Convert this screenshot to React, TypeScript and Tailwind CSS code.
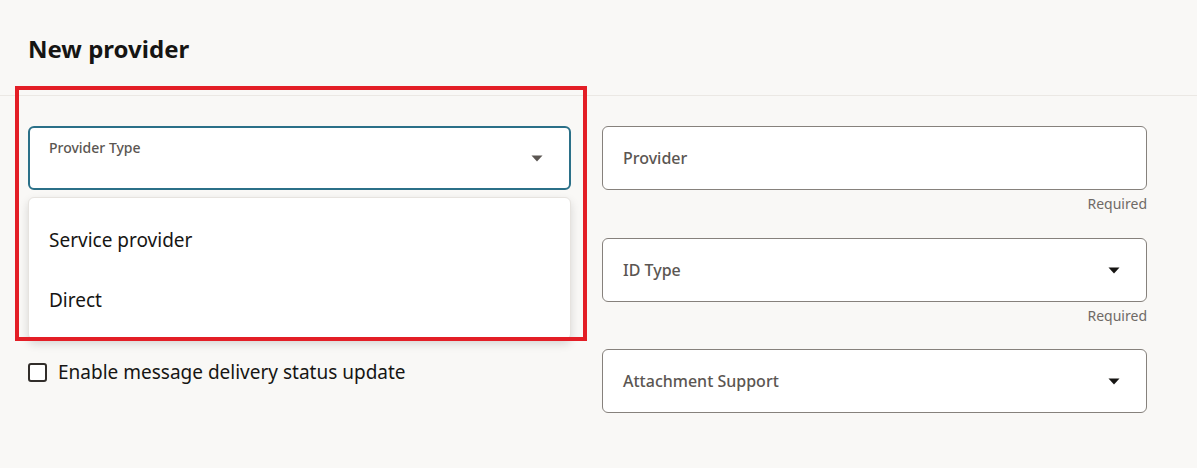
import React from 'react';

const Caret: React.FC<{ className?: string }> = ({ className }) => (
  <svg width="12" height="7" viewBox="0 0 12 7" className={className}>
    <path d="M0.5 0.5 L11.5 0.5 L6 6.5 Z" fill="currentColor" />
  </svg>
);

const SelectField: React.FC<{ label: string }> = ({ label }) => (
  <div className="h-[64px] rounded-[6px] border border-[#86817c] bg-white flex items-center justify-between pl-[20px] pr-[26px]">
    <span className="text-[16px] font-medium text-[#5b5652]">{label}</span>
    <Caret className="text-[#161513]" />
  </div>
);

const Required: React.FC<{ h: string }> = ({ h }) => (
  <div className={`${h} pt-[4px] text-right text-[14px] leading-[20px] text-[#6f6a66]`}>Required</div>
);

export default function App() {
  return (
    <div className="relative w-[1197px] h-[468px] overflow-hidden bg-[#f9f8f6] font-['Noto_Sans',sans-serif]">
      {/* Header */}
      <header className="h-[96px] border-b border-[#ebe8e4] px-[28px] pt-[33px]">
        <h1 className="text-[24px] leading-[32px] font-bold text-[#161513]">New provider</h1>
      </header>

      {/* Form */}
      <div className="grid grid-cols-[543px_545px] gap-x-[31px] px-[28px] pt-[30px]">
        {/* Left column */}
        <div className="flex flex-col">
          <div className="relative">
            <div className="h-[64px] rounded-[6px] border-2 border-[#2b7088] bg-white flex items-center justify-between pl-[19px] pr-[26px]">
              <span className="self-start pt-[10px] text-[14px] leading-[20px] font-medium text-[#5b5652]">Provider Type</span>
              <Caret className="text-[#5b5652]" />
            </div>

            {/* Dropdown menu */}
            <div className="absolute left-0 right-0 top-[71px] h-[143px] rounded-[6px] border border-[#e6e3df] bg-white py-[12px] shadow-[0_4px_10px_rgba(0,0,0,0.14)] z-10">
              <div className="h-[60px] flex items-center px-[20px] text-[19px] text-[#161513]">Service provider</div>
              <div className="h-[60px] flex items-center px-[20px] text-[19px] text-[#161513]">Direct</div>
            </div>
          </div>

          <label className="mt-[170px] flex items-center gap-[11px]">
            <span className="w-[19px] h-[19px] rounded-[3px] border-2 border-[#312d2a] bg-white" />
            <span className="text-[19px] leading-[24px] text-[#161513]">Enable message delivery status update</span>
          </label>
        </div>

        {/* Right column */}
        <div className="flex flex-col">
          <div className="h-[64px] rounded-[6px] border border-[#86817c] bg-white flex items-center pl-[20px]">
            <span className="text-[16px] font-medium text-[#5b5652]">Provider</span>
          </div>
          <Required h="h-[48px]" />
          <SelectField label="ID Type" />
          <Required h="h-[47px]" />
          <SelectField label="Attachment Support" />
        </div>
      </div>

      {/* Highlight annotation */}
      <div className="absolute left-[15px] top-[86px] w-[572px] h-[255px] border-4 border-[#e31e26] z-20 pointer-events-none" />
    </div>
  );
}
